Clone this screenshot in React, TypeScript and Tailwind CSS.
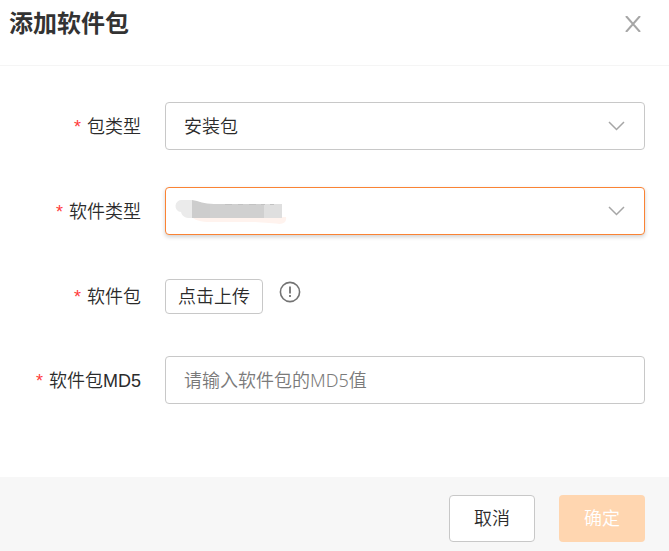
import { useState } from "react";
import type { ReactNode } from "react";

type FormItemProps = {
  label: string;
  htmlFor: string;
  children: ReactNode;
};

const fieldClass =
  "block w-full h-12 rounded border bg-white pl-[18px] pr-12 text-lg font-[350] text-[#2b2b2b] outline-none";

const FormItem = ({ label, htmlFor, children }: FormItemProps) => (
  <div className="flex items-center gap-6">
    <label
      htmlFor={htmlFor}
      className="flex w-[117px] shrink-0 items-center justify-end gap-1.5 whitespace-nowrap pt-0.5 text-lg leading-7"
    >
      <span className="text-[#ff3b3b]">*</span>
      {label}
    </label>
    <div className="min-w-0 flex-1">{children}</div>
  </div>
);

const ArrowIcon = () => (
  <svg
    className="pointer-events-none absolute right-5 top-[18px]"
    width="17"
    height="12"
    viewBox="0 0 17 12"
    fill="none"
    stroke="#a6a6a6"
    strokeWidth="1.5"
  >
    <path d="M1 2l7.5 7.5L16 2" />
  </svg>
);

// Nombre oculto del tipo de software
const HiddenName = () => (
  <svg
    className="pointer-events-none absolute left-2.5 top-2.5"
    width="112"
    height="30"
    viewBox="0 0 112 30"
  >
    <path d="M17 20h94c1 5-3 8-10 6.5L80 25H50c-14 0-28 1-33-5z" fill="#fff3ee" />
    <path d="M17 3H7a6 6 0 0 0-1 12c1 4 4 6 9 6h2z" fill="#ebebeb" />
    <path d="M17 3c7 1 12 4 22 4h13v14H17z" fill="#cdcdcd" />
    <path d="M35 7h54v14H35z" fill="#d0d0d0" />
    <path d="M89 7h18v14H89z" fill="#dfdfdf" />
    <path d="M50 7.5h7M63 7.5h5M74 7.5h7M86 7.5h4M95 7.5h4" stroke="#c2c2c2" />
  </svg>
);

const AddPackage = () => {
  const [packageType, setPackageType] = useState("install");
  const [softwareType, setSoftwareType] = useState("");
  const [md5, setMd5] = useState("");

  return (
    <div className="min-h-screen bg-white font-['Liberation_Sans','Noto_Sans_CJK_SC',sans-serif] font-[350] text-[#2b2b2b]">
      <header className="flex h-[66px] items-start justify-between border-b border-[#f5f5f5] pl-[9px] pr-7 pt-2">
        <h1 className="text-2xl leading-8 font-bold text-[#333333]">添加软件包</h1>
        <button type="button" aria-label="关闭" className="pt-2">
          <svg width="16" height="16" viewBox="0 0 16 16" fill="none" stroke="#a6a6a6" strokeWidth="2">
            <path d="M1 0l14 16M15 0L1 16" />
          </svg>
        </button>
      </header>

      <form>
        <div className="flex flex-col gap-[37px] px-6 pb-[73px] pt-9">
          <FormItem label="包类型" htmlFor="packageType">
            <div className="relative">
              <select
                id="packageType"
                value={packageType}
                onChange={e => setPackageType(e.target.value)}
                className={`${fieldClass} appearance-none border-[#c8c8c8] pt-0.5`}
              >
                <option value="install">安装包</option>
              </select>
              <ArrowIcon />
            </div>
          </FormItem>

          <FormItem label="软件类型" htmlFor="softwareType">
            <div className="relative">
              <select
                id="softwareType"
                value={softwareType}
                onChange={e => setSoftwareType(e.target.value)}
                className={`${fieldClass} appearance-none border-[#fa8334] pt-0.5 shadow-[0_2px_4px_rgba(0,0,0,0.18)]`}
              >
                <option value=""></option>
              </select>
              <HiddenName />
              <ArrowIcon />
            </div>
          </FormItem>

          <FormItem label="软件包" htmlFor="upload">
            <div className="flex items-start gap-4 pb-[5px] pt-[7px]">
              <button
                id="upload"
                type="button"
                className="h-[35px] rounded border border-[#c8c8c8] bg-white px-3 text-lg leading-8"
              >
                点击上传
              </button>
              <svg className="mt-0.5" width="22" height="22" viewBox="0 0 22 22" fill="none" stroke="#737373">
                <circle cx="11" cy="11" r="9.6" strokeWidth="1.6" />
                <path d="M11 5.5v7M11 14v2" strokeWidth="1.8" />
              </svg>
            </div>
          </FormItem>

          <FormItem label="软件包MD5" htmlFor="md5">
            <input
              id="md5"
              type="text"
              value={md5}
              onChange={e => setMd5(e.target.value)}
              placeholder="请输入软件包的MD5值"
              className={`${fieldClass} border-[#c8c8c8] font-['Noto_Sans','Noto_Sans_CJK_SC',sans-serif] placeholder:text-[#7a7a7a]`}
            />
          </FormItem>
        </div>

        <footer className="flex justify-end gap-6 bg-[#f7f7f7] px-6 pb-[9px] pt-[18px]">
          <button type="button" className="h-[47px] w-[86px] rounded border border-[#c8c8c8] bg-white text-lg">
            取消
          </button>
          <button type="submit" disabled className="h-[47px] w-[86px] rounded bg-[#ffd6b0] text-lg text-white">
            确定
          </button>
        </footer>
      </form>
    </div>
  );
};

export default AddPackage;
